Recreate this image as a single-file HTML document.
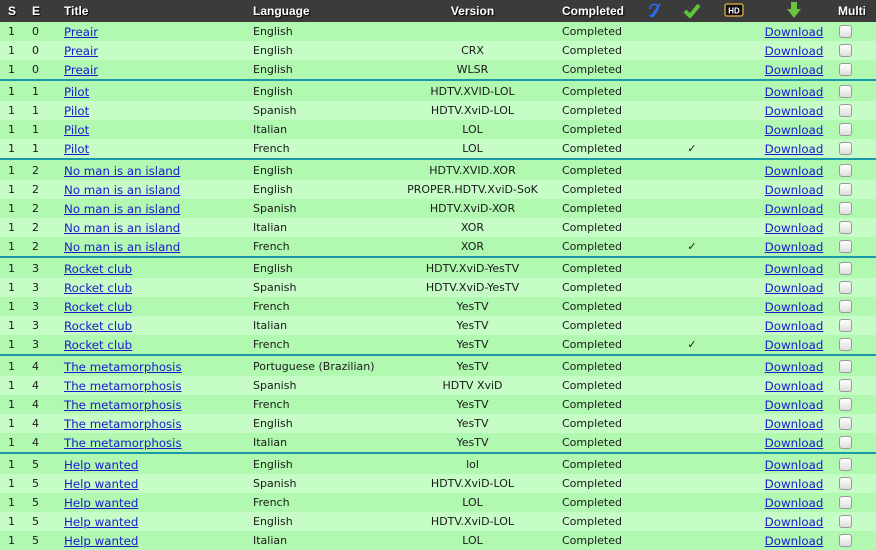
<!DOCTYPE html>
<html><head><meta charset="utf-8"><style>
body{margin:0;width:876px;height:550px;overflow:hidden;background:#b3f9b3;font-family:"DejaVu Sans",Verdana,sans-serif;font-size:11px;color:#1a1a1a}
table{border-collapse:collapse;table-layout:fixed;width:876px}
td,th{padding:0;height:19px;white-space:nowrap;overflow:hidden}
th{height:22px;background:#3b3b3b;color:#fff;font-weight:bold;text-align:left;text-shadow:1px 1px 1px #000;font-size:12px;font-family:"Liberation Sans",Arial,sans-serif}
tr.d td{background:#b1f8b1}
tr.l td{background:#c6fcc6}
tr.s td{height:3px;line-height:0;font-size:0;background:linear-gradient(#1a9aa8 0,#1a9aa8 2px,#b1f8b1 2px)}
a{color:#1a1acc;text-decoration:underline;font-size:11.8px}
.c{text-align:center}
.cb{display:inline-block;width:11px;height:11px;border:1px solid #999;border-radius:3px;background:linear-gradient(#fff,#ddd);vertical-align:middle}
</style></head><body>
<table>
<colgroup><col style="width:24px"><col style="width:32px"><col style="width:189px"><col style="width:140px"><col style="width:175px"><col style="width:80px"><col style="width:32px"><col style="width:40px"><col style="width:44px"><col style="width:76px"><col style="width:44px"></colgroup>
<tr><th style="padding-left:8px">S</th><th style="padding-left:8px">E</th><th style="padding-left:8px">Title</th><th style="padding-left:8px">Language</th><th class="c">Version</th><th style="padding-left:2px">Completed</th>
<th class="c"><svg width="20" height="18" viewBox="0 0 20 18"><path d="M4 8 C4 2 12 2 12 7 C12 10 9 11 8 14 C7 16 5 16 4 14 M14 3 L5 16" stroke="#2a6ff0" stroke-width="1.6" fill="none"/></svg></th>
<th class="c"><svg width="18" height="16" viewBox="0 0 18 16"><path d="M2 9 L7 14 L16 3" stroke="#5cc43a" stroke-width="4" fill="none"/></svg></th>
<th class="c"><svg width="20" height="14" viewBox="0 0 20 14"><rect x="1" y="1" width="18" height="12" rx="2" fill="#111" stroke="#c8a040" stroke-width="1.5"/><text x="10" y="10.5" font-size="8" fill="#fff" text-anchor="middle" font-family="Liberation Sans" font-weight="bold">HD</text></svg></th>
<th class="c"><svg width="16" height="18" viewBox="0 0 16 18"><path d="M5 1 H11 V8 H15 L8 17 L1 8 H5 Z" fill="#6cc23a"/></svg></th>
<th style="padding-left:6px">Multi</th></tr>
<tbody id="b"></tbody>
</table>
<script>
var g=[["0",[["Preair","English",""],["Preair","English","CRX"],["Preair","English","WLSR"]]],
["1",[["Pilot","English","HDTV.XVID-LOL"],["Pilot","Spanish","HDTV.XviD-LOL"],["Pilot","Italian","LOL"],["Pilot","French","LOL",1]]],
["2",[["No man is an island","English","HDTV.XVID.XOR"],["No man is an island","English","PROPER.HDTV.XviD-SoK"],["No man is an island","Spanish","HDTV.XviD-XOR"],["No man is an island","Italian","XOR"],["No man is an island","French","XOR",1]]],
["3",[["Rocket club","English","HDTV.XviD-YesTV"],["Rocket club","Spanish","HDTV.XviD-YesTV"],["Rocket club","French","YesTV"],["Rocket club","Italian","YesTV"],["Rocket club","French","YesTV",1]]],
["4",[["The metamorphosis","Portuguese (Brazilian)","YesTV"],["The metamorphosis","Spanish","HDTV XviD"],["The metamorphosis","French","YesTV"],["The metamorphosis","English","YesTV"],["The metamorphosis","Italian","YesTV"]]],
["5",[["Help wanted","English","lol"],["Help wanted","Spanish","HDTV.XviD-LOL"],["Help wanted","French","LOL"],["Help wanted","English","HDTV.XviD-LOL"],["Help wanted","Italian","LOL"]]]];
var h="";g.forEach(function(x,i){if(i)h+='<tr class="s"><td colspan="11"></td></tr>';x[1].forEach(function(r,j){h+='<tr class="'+(j%2?'l':'d')+'"><td style="padding-left:8px">1</td><td style="padding-left:8px">'+x[0]+'</td><td style="padding-left:8px"><a href="#">'+r[0]+'</a></td><td style="padding-left:8px">'+r[1]+'</td><td class="c">'+r[2]+'</td><td style="padding-left:2px">Completed</td><td></td><td class="c">'+(r[3]?'✓':'')+'</td><td></td><td class="c"><a href="#">Download</a></td><td style="padding-left:7px"><span class="cb"></span></td></tr>';});});
document.getElementById("b").innerHTML=h;
</script>
</body></html>
